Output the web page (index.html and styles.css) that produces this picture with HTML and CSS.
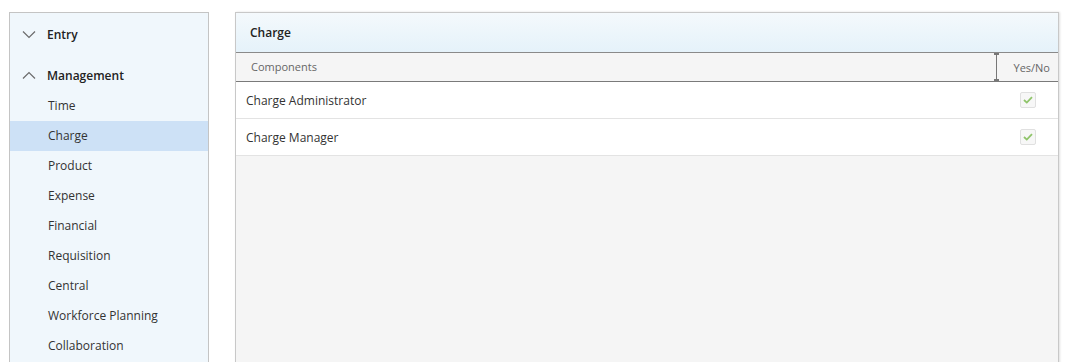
FILE: index.html
```html
<!DOCTYPE html>
<html>
<head>
  <meta charset="UTF-8">
  <link rel="stylesheet" href="styles.css">
</head>
<body>
  <div class="sidebar">
    <div class="group-title">
      <svg class="chevron" width="14" height="14" viewBox="0 0 14 14"><path d="M1 4.5 L7 10.5 L13 4.5" fill="none" stroke="#6b6b6b" stroke-width="1.2"/></svg>
      <span>Entry</span>
    </div>
    <div class="group-title group-open">
      <svg class="chevron" width="14" height="14" viewBox="0 0 14 14"><path d="M1 10.5 L7 4.5 L13 10.5" fill="none" stroke="#6b6b6b" stroke-width="1.2"/></svg>
      <span>Management</span>
    </div>
    <div class="nav-item">Time</div>
    <div class="nav-item active">Charge</div>
    <div class="nav-item">Product</div>
    <div class="nav-item">Expense</div>
    <div class="nav-item">Financial</div>
    <div class="nav-item">Requisition</div>
    <div class="nav-item">Central</div>
    <div class="nav-item">Workforce Planning</div>
    <div class="nav-item">Collaboration</div>
  </div>

  <div class="panel">
    <div class="panel-header">Charge</div>
    <div class="col-header">
      <div class="col-name">Components</div>
      <div class="col-check">
        <span class="resizer"></span>
        Yes/No
      </div>
    </div>
    <div class="row">
      <div class="col-name">Charge Administrator</div>
      <div class="col-check"><span class="checkbox"><svg width="10" height="8" viewBox="0 0 10 8"><path d="M1 4 L3.8 6.6 L9 1.2" fill="none" stroke="#8fc46a" stroke-width="1.8"/></svg></span></div>
    </div>
    <div class="row">
      <div class="col-name">Charge Manager</div>
      <div class="col-check"><span class="checkbox"><svg width="10" height="8" viewBox="0 0 10 8"><path d="M1 4 L3.8 6.6 L9 1.2" fill="none" stroke="#8fc46a" stroke-width="1.8"/></svg></span></div>
    </div>
  </div>
</body>
</html>
```

FILE: styles.css
```css
html, body {
  height: 100%;
}

body {
  margin: 0;
  padding: 12px 0 0 9px;
  display: flex;
  align-items: flex-start;
  gap: 26px;
  overflow: hidden;
  background: #fff;
  font-family: 'Open Sans', 'Noto Sans', sans-serif;
  font-size: 12px;
  color: #333;
  box-sizing: border-box;
}

.sidebar {
  width: 198px;
  min-height: 400px;
  padding-top: 6px;
  background: #f0f7fc;
  border: 1px solid #c4c4c4;
  flex-shrink: 0;
}

.group-title {
  height: 30px;
  display: flex;
  align-items: center;
  padding-left: 12px;
  font-size: 12px;
  font-weight: 600;
  color: #222;
}

.group-title .chevron {
  margin-right: 11px;
}

.group-open {
  margin-top: 11px;
  margin-bottom: 1px;
}

.nav-item {
  height: 30px;
  line-height: 30px;
  padding-left: 38px;
  color: #333;
}

.nav-item.active {
  background: #cde1f6;
}

.panel {
  width: 822px;
  min-height: 400px;
  background: #f5f5f5;
  border: 1px solid #c8c8c8;
  box-shadow: 1px 0 2px rgba(0, 0, 0, 0.12);
  flex-shrink: 0;
}

.panel-header {
  height: 39px;
  line-height: 39px;
  padding-left: 14px;
  font-size: 12px;
  font-weight: 600;
  color: #222;
  background: linear-gradient(#f4f9fc, #e5f2fa);
  border-bottom: 1px solid #8a8a8a;
}

.col-header {
  height: 28px;
  display: flex;
  align-items: center;
  background: #f5f5f5;
  border-bottom: 1px solid #7a7a7a;
  color: #666;
  font-size: 11px;
}

.col-header .col-name {
  padding-left: 15px;
  padding-bottom: 1px;
}

.col-name {
  flex: 1;
  padding-left: 10px;
}

.col-check {
  position: relative;
  width: 62px;
  height: 100%;
  display: flex;
  align-items: center;
  justify-content: flex-end;
  padding-right: 8px;
  box-sizing: border-box;
}

.resizer {
  position: absolute;
  left: 0;
  top: 0;
  bottom: 0;
  width: 1px;
  background: #777;
}

.resizer::before,
.resizer::after {
  content: '';
  position: absolute;
  left: -2px;
  width: 5px;
  height: 2px;
  background: #777;
}

.resizer::before {
  top: 0;
}

.resizer::after {
  bottom: 0;
}

.row {
  height: 36px;
  display: flex;
  align-items: center;
  background: #fff;
  border-bottom: 1px solid #e3e3e3;
  color: #333;
}

.row .col-check {
  justify-content: flex-start;
  padding-left: 24px;
}

.checkbox {
  width: 14px;
  height: 14px;
  border: 1px solid #e0e0e0;
  border-radius: 2px;
  background: #f7f7f7;
  display: flex;
  align-items: center;
  justify-content: center;
}
```
